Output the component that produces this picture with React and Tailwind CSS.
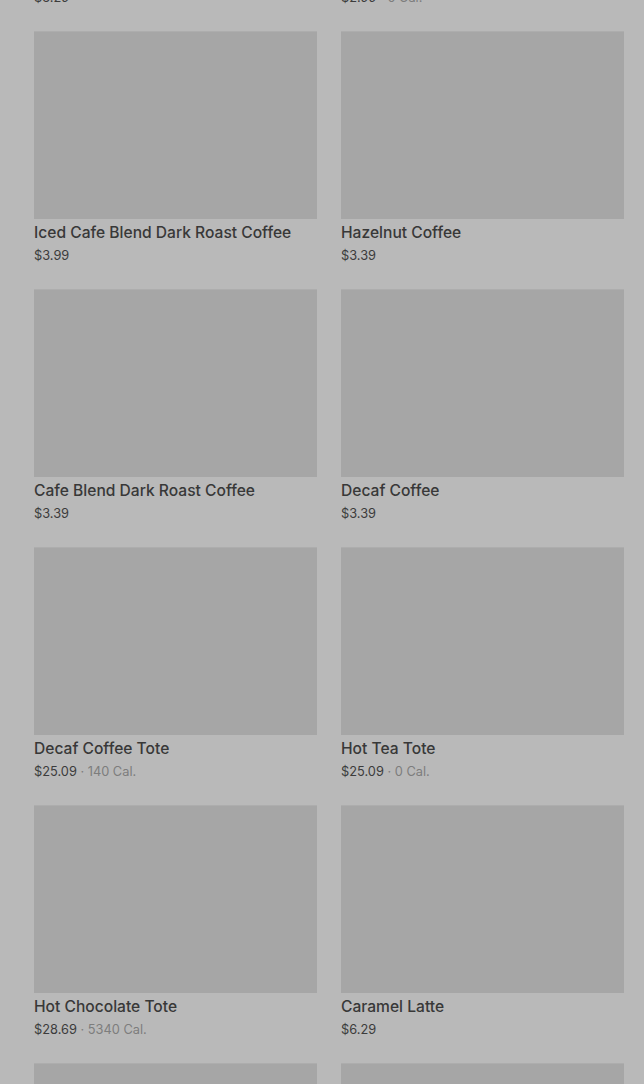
const products = [
  { name: 'Cold Brew Coffee', price: '$3.29' },
  { name: 'Iced Coffee', price: '$2.99', cal: '0 Cal.' },
  { name: 'Iced Cafe Blend Dark Roast Coffee', price: '$3.99' },
  { name: 'Hazelnut Coffee', price: '$3.39' },
  { name: 'Cafe Blend Dark Roast Coffee', price: '$3.39' },
  { name: 'Decaf Coffee', price: '$3.39' },
  { name: 'Decaf Coffee Tote', price: '$25.09', cal: '140 Cal.' },
  { name: 'Hot Tea Tote', price: '$25.09', cal: '0 Cal.' },
  { name: 'Hot Chocolate Tote', price: '$28.69', cal: '5340 Cal.' },
  { name: 'Caramel Latte', price: '$6.29' },
  { name: 'Vanilla Latte', price: '$6.29' },
  { name: 'Mocha Latte', price: '$6.29' },
];

function ProductCard({ item }) {
  return (
    <div className="flex flex-col">
      <div className="h-[188px] bg-[#a6a6a6] border-t border-[#adadad]" />
      <p className="mt-[3px] text-[15.6px] leading-[22px] font-medium text-[#383838]">
        {item.name}
      </p>
      <p className="text-[12.8px] leading-6 text-[#3c3c3c]">
        {item.price}
        {item.cal && (
          <span className="text-[#7d7d7d]"> · {item.cal}</span>
        )}
      </p>
    </div>
  );
}

export default function App() {
  return (
    <div
      className="w-[644px] h-[1084px] overflow-hidden bg-[#b9b9b9]"
      style={{ fontFamily: 'Inter, "Noto Sans", sans-serif' }}
    >
      <div className="-mt-[227px] pl-[34px] pr-[20px] grid grid-cols-2 gap-x-6 gap-y-[21px]">
        {products.map((p, i) => (
          <ProductCard key={i} item={p} />
        ))}
      </div>
    </div>
  );
}
